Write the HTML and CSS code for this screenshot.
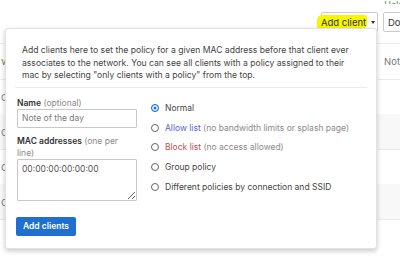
FILE: index.html
```html
<!DOCTYPE html>
<html lang="en">
  <head>
    <meta charset="UTF-8" />
    <meta name="viewport" content="width=device-width, initial-scale=1.0" />
    <title>Clients</title>
    <link rel="stylesheet" href="styles.css">
  </head>

  <body>
    <div class="top">
      <a class="help" href="#">Help</a>
    </div>
    <div class="bar">
      <div class="add">
        <button class="btn-add"><span class="hl">Add client</span><span class="caret"></span></button>
        <!-- 弹出层 -->
        <div class="pop">
          <p class="intro">
            Add clients here to set the policy for a given MAC address before that client ever
            associates to the network. You can see all clients with a policy assigned to their
            mac by selecting "only clients with a policy" from the top.
          </p>
          <div class="form">
            <div class="left">
              <label class="lab"><b>Name</b> <span class="opt">(optional)</span></label>
              <input type="text" class="ipt" placeholder="Note of the day" />
              <label class="lab lab2"><b>MAC addresses</b> <span class="opt">(one per line)</span></label>
              <textarea class="ta" placeholder="00:00:00:00:00:00"></textarea>
              <button class="btn-ok">Add clients</button>
            </div>
            <div class="right">
              <label class="row"><input type="radio" name="pol" checked /> Normal</label>
              <label class="row"><input type="radio" name="pol" /> <span class="allow">Allow list</span>&nbsp;<span class="opt">(no bandwidth limits or splash page)</span></label>
              <label class="row"><input type="radio" name="pol" /> <span class="block">Block list</span>&nbsp;<span class="opt">(no access allowed)</span></label>
              <label class="row"><input type="radio" name="pol" /> Group policy</label>
              <label class="row"><input type="radio" name="pol" /> Different policies by connection and SSID</label>
            </div>
          </div>
        </div>
      </div>
      <button class="btn-do">Do</button>
    </div>

    <table class="list">
      <tr class="head"><td class="c1">vi</td><td></td><td class="c3">Not</td></tr>
      <tr><td class="c1">C</td><td></td><td></td></tr>
      <tr class="odd"><td class="c1">C</td><td></td><td></td></tr>
      <tr><td class="c1">C</td><td></td><td></td></tr>
      <tr class="odd"><td class="c1">C</td><td></td><td></td></tr>
      <tr><td class="c1"></td><td></td><td></td></tr>
    </table>
  </body>
</html>
```

FILE: styles.css
```css
* {
  margin: 0;
  padding: 0;
  box-sizing: border-box;
}

body {
  font-family: Inter, "Noto Sans", sans-serif;
  font-size: 8.5px;
  color: #444;
  background: #fff;
  overflow: hidden;
}

.top {
  height: 4px;
  overflow: hidden;
  text-align: right;
}

.help {
  display: inline-block;
  margin-top: -10px;
  margin-right: -4px;
  font-size: 9px;
  line-height: 12px;
  color: #3c9a3c;
}

.bar {
  display: flex;
  justify-content: flex-end;
  gap: 5px;
  padding-top: 8px;
  margin-right: -13px;
  height: 39px;
}

.add {
  position: relative;
}

.btn-add,
.btn-do {
  height: 20px;
  border: 1px solid #ccc;
  border-radius: 2px;
  background: #fff;
  font-family: inherit;
  font-size: 9.5px;
  color: #333;
  display: flex;
  align-items: center;
}

.btn-add {
  width: 57px;
  padding-left: 4px;
}

.btn-do {
  width: 30px;
  padding-left: 4px;
}

.hl {
  background: #f6f600;
  border-radius: 5px 2px 6px 3px;
  padding: 2px 1px 2px 4px;
  margin-left: -9px;
}

.caret {
  margin-left: 4px;
  border-left: 2.5px solid transparent;
  border-right: 2.5px solid transparent;
  border-top: 3px solid #333;
}

.pop {
  position: absolute;
  top: 16px;
  right: 1px;
  width: 372px;
  height: 221px;
  background: #fff;
  border: 1px solid #e2e2e2;
  border-radius: 3px;
  box-shadow: 0 2px 5px rgba(0, 0, 0, 0.22);
  z-index: 2;
}

.intro {
  margin: 0 9px;
  padding: 15px 7px 5px;
  font-size: 8.6px;
  line-height: 12.5px;
  color: #444;
  border-bottom: 1px solid #ececec;
}

.form {
  display: flex;
  padding: 9px 11px 0;
}

.left {
  width: 120px;
  display: flex;
  flex-direction: column;
  align-items: flex-start;
}

.lab {
  line-height: 12px;
  color: #333;
}

.lab b {
  font-weight: 600;
}

.lab2 {
  margin-top: 7px;
  line-height: 12px;
}

.opt {
  color: #8a8a8a;
}

.ipt,
.ta {
  width: 120px;
  border: 1px solid #c8c8c8;
  border-radius: 1px;
  font-family: inherit;
  font-size: 8.5px;
  padding: 0 4px;
}

.ipt {
  height: 19px;
}

.ipt::placeholder {
  color: #7a7a7a;
}

.ta {
  height: 42px;
  padding-top: 4px;
  resize: vertical;
}

.ta::placeholder {
  color: #555;
}

.btn-ok {
  margin-top: 16px;
  margin-left: -1px;
  width: 60px;
  height: 19px;
  border: none;
  border-radius: 2px;
  background: #1e6fd0;
  color: #fff;
  font-family: inherit;
  font-size: 8.5px;
  font-weight: 600;
}

.right {
  margin-left: 14px;
  padding-top: 2px;
  display: flex;
  flex-direction: column;
}

.row {
  height: 19.6px;
  display: flex;
  align-items: center;
  color: #444;
}

.row input {
  appearance: none;
  width: 8px;
  height: 8px;
  border: 1px solid #666;
  border-radius: 50%;
  margin: 0 6px 0 0;
}

.row input:checked {
  border-color: #1a6ee6;
  background: #1a6ee6;
  box-shadow: inset 0 0 0 1.5px #fff;
}

.allow {
  color: #5e5ed8;
}

.block {
  color: #c0504d;
}

.list {
  width: 100%;
  border-collapse: collapse;
  color: #777;
  font-size: 9.5px;
}

.list td {
  height: 35px;
  border-top: 1px solid #ebebeb;
}

.list .head td {
  height: 36px;
}

.list .odd td {
  background: #f8f8f8;
  border-top-color: #f8f8f8;
}

.c1 {
  width: 20px;
  padding-left: 1px;
}

.c3 {
  width: 14px;
  white-space: nowrap;
}
```
